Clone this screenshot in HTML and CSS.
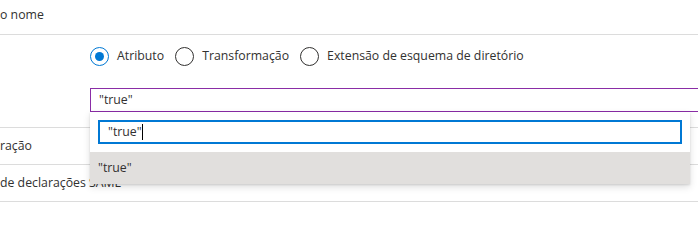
FILE: index.html
```html
<!DOCTYPE html>
<html lang="pt">
<head>
<meta charset="utf-8">
<link rel="stylesheet" href="styles.css">
</head>
<body>
<div class="page">
  <div class="row row-top">
    <div class="label">o nome</div>
  </div>
  <div class="row row-source">
    <div class="label"></div>
    <div class="field">
      <div class="radios">
        <label class="radio checked"><span class="circle"></span><span class="rtext">Atributo</span></label>
        <label class="radio"><span class="circle"></span><span class="rtext">Transformação</span></label>
        <label class="radio"><span class="circle"></span><span class="rtext">Extensão de esquema de diretório</span></label>
      </div>
      <div class="combo">
        <div class="combo-box">"true"</div>
        <div class="dropdown">
          <div class="search"><span class="search-text">"true"</span><span class="caret"></span></div>
          <div class="option">"true"</div>
        </div>
      </div>
    </div>
  </div>
  <div class="row row-std">
    <div class="label">ração</div>
  </div>
  <div class="row row-std">
    <div class="label">de declarações SAML</div>
  </div>
</div>
</body>
</html>
```

FILE: styles.css
```css
html, body {
  margin: 0;
  padding: 0;
  background: #ffffff;
  overflow: hidden;
}

body {
  width: 698px;
  height: 250px;
  font-family: "Open Sans", "Noto Sans", sans-serif;
  font-size: 12.3px;
  color: #323130;
}

.page {
  display: flex;
  flex-direction: column;
}

.row {
  display: flex;
  border-bottom: 1px solid #dcdcdc;
}

.label {
  width: 90px;
  flex: none;
  white-space: nowrap;
  line-height: 18px;
}

.row-top {
  height: 35px;
  box-sizing: border-box;
  padding-top: 6px;
}

.row-std {
  height: 36px;
  align-items: center;
}

.row-source {
  padding-top: 11px;
  padding-bottom: 15px;
}

.field {
  display: flex;
  flex-direction: column;
  gap: 22px;
  flex: 1;
}

.radios {
  display: flex;
  align-items: center;
  height: 20px;
  gap: 11px;
}

.radio {
  display: flex;
  align-items: center;
  gap: 8px;
}

.circle {
  width: 19px;
  height: 19px;
  box-sizing: border-box;
  border: 1px solid #323130;
  border-radius: 50%;
  display: flex;
  align-items: center;
  justify-content: center;
}

.radio.checked .circle {
  border-color: #0078d4;
}

.radio.checked .circle::after {
  content: "";
  width: 9px;
  height: 9px;
  border-radius: 50%;
  background: #0078d4;
}

.rtext {
  line-height: 18px;
}

.combo {
  position: relative;
}

.combo-box {
  width: 640px;
  height: 24px;
  box-sizing: border-box;
  border: 1px solid #8a2da6;
  padding: 0 8px;
  line-height: 22px;
}

.dropdown {
  position: absolute;
  left: 0;
  top: 24px;
  width: 600px;
  background: #ffffff;
  box-shadow: 0 3.2px 7.2px rgba(0, 0, 0, 0.132), 0 0.6px 1.8px rgba(0, 0, 0, 0.108);
  z-index: 2;
  padding-top: 8px;
}

.search {
  margin: 0 8px 8px;
  height: 24px;
  box-sizing: border-box;
  border: 2px solid #0078d4;
  padding: 0 8px;
  display: flex;
  align-items: center;
  line-height: 20px;
}

.caret {
  width: 1px;
  height: 16px;
  background: #000000;
}

.option {
  height: 32px;
  background: #e1dfdd;
  padding: 0 8px;
  line-height: 32px;
}
```
